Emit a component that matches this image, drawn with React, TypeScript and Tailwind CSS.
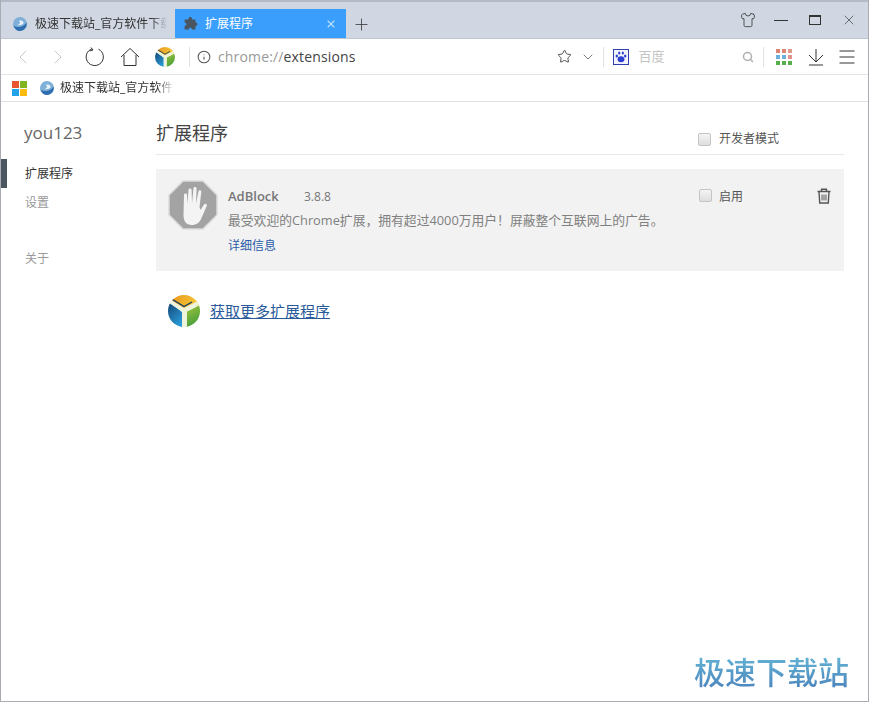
import React from 'react';
import { ChevronLeft, ChevronRight, ChevronDown, Info, Plus, Search, Shirt, Star, X } from 'lucide-react';

const font = { cjk: "font-['Open_Sans','Noto_Sans_CJK_SC',sans-serif]" };

const Logo = ({ size, id }: { size: number; id: string }) => (
  <svg width={size} height={size} viewBox="0 0 32 32">
    <defs>
      <clipPath id={`${id}-clip`}><circle cx="16" cy="16" r="16" /></clipPath>
      <linearGradient id={`${id}-top`} x1="0" y1="0" x2="1" y2="0.4">
        <stop offset="0" stopColor="#e88f1a" />
        <stop offset="1" stopColor="#f6cf3a" />
      </linearGradient>
      <linearGradient id={`${id}-left`} x1="0" y1="0" x2="0.6" y2="1">
        <stop offset="0" stopColor="#12406f" />
        <stop offset="1" stopColor="#2a9ad6" />
      </linearGradient>
      <linearGradient id={`${id}-right`} x1="0" y1="0" x2="0.4" y2="1">
        <stop offset="0" stopColor="#a6c83a" />
        <stop offset="1" stopColor="#3f9a3c" />
      </linearGradient>
    </defs>
    <g clipPath={`url(#${id}-clip)`}>
      <path d="M17 15 L3 5 L8 -2 L26 -2 L34 9 Z" fill={`url(#${id}-top)`} />
      <path d="M18 17 L34 9 L34 34 L18 34 Z" fill={`url(#${id}-right)`} />
      <path d="M14 17 L1 7 L-2 16 L2 28 L14 34 Z" fill={`url(#${id}-left)`} />
      <path d="M3 5 L16 13 L29 6.5 L31 9.5 L19 16 L19 32 L14 32 L14 16.5 L1 8 Z" fill="#eef4dc" />
      <path d="M4.5 4.5 L16 11.5 L24 7" stroke="#123c66" strokeWidth="1.4" fill="none" />
    </g>
  </svg>
);

const Globe = () => (
  <svg width="14" height="14" viewBox="0 0 14 14" className="shrink-0">
    <circle cx="7" cy="7" r="7" fill="#7fb0d8" />
    <path d="M0.5 8.5 C4 11 10 11 13.6 5.5 C14.4 10 11 14 7 14 C4 14 1.5 12 0.5 8.5 Z" fill="#2f6fb0" />
    <path d="M6 4 C8 3 11 4 10.5 6.5 C9 8 6.5 8.5 5 8 C6.5 7 8 6 6 4 Z" fill="#eaf2f9" />
  </svg>
);

const Checkbox = () => (
  <span className="block w-[13px] h-[13px] rounded-[2px] border border-[#c4c4c4] bg-gradient-to-b from-[#f4f4f4] to-[#dedede]" />
);

const Divider = () => <span className="block w-px h-[20px] bg-[#e2e2e2]" />;

export default function App() {
  return (
    <div className={`w-[869px] h-[702px] flex flex-col overflow-hidden bg-white border border-t-0 border-[#a9adb3] ${font.cjk}`}>
      {/* title bar */}
      <div className="h-[39px] shrink-0 flex items-end bg-[#d0d7e2] border-t-2 border-[#b3bac5] border-b border-b-[#bfc6d1]">
        <div className="w-[174px] h-[28px] flex items-center pl-[12px] gap-[8px] text-[12px] text-[#333]">
          <Globe />
          <span className="w-[132px] overflow-hidden whitespace-nowrap [mask-image:linear-gradient(to_right,black_88%,transparent)]">极速下载站_官方软件下载</span>
        </div>
        <div className="w-[171px] h-[29px] flex items-center pl-[8px] pr-[9px] bg-[#3a9efc] text-white text-[12px]">
          <svg width="15" height="15" viewBox="0 0 15 15" fill="#4a5560">
            <path d="M5.5 2.6 C5.5 0.4 9 0.4 9 2.6 L9 3.6 L12.5 3.6 L12.5 6.6 C14.8 6.2 15.4 10 12.5 9.8 L12.5 13.6 L8.8 13.6 C9.2 11.2 5.6 11.2 6 13.6 L1.6 13.6 L1.6 9.8 C4 10 4 6.4 1.6 6.6 L1.6 3.6 L5.5 3.6 Z" />
          </svg>
          <span className="ml-[7px] flex-1">扩展程序</span>
          <X size={12} strokeWidth={2.2} className="text-[#bfe0ff]" />
        </div>
        <Plus size={19} strokeWidth={1} className="ml-[6px] mb-[4px] text-[#333]" />
        <div className="ml-auto flex items-center pr-[11px] self-center text-[#333]">
          <Shirt size={16} strokeWidth={1.2} />
          <span className="block ml-[18px] w-[14px] h-px bg-[#333]" />
          <span className="block ml-[21px] w-[12px] h-[10px] border border-t-2 border-[#333]" />
          <X size={16} strokeWidth={1} className="ml-[20px]" />
        </div>
      </div>

      {/* toolbar */}
      <div className="h-[36px] shrink-0 flex items-center border-b border-[#e4e4e4]">
        <ChevronLeft size={24} strokeWidth={1} className="ml-[10px] text-[#c8c8c8]" />
        <ChevronRight size={24} strokeWidth={1} className="ml-[11px] text-[#c8c8c8]" />
        <svg width="20" height="20" viewBox="0 0 20 20" fill="none" stroke="#333" className="ml-[15px]">
          <path d="M7 1.8 A8.6 8.6 0 1 0 13.5 2.2" />
          <path d="M6 0.5 L8 3 L4.8 4" />
        </svg>
        <svg width="20" height="20" viewBox="0 0 20 20" fill="none" stroke="#333" className="ml-[15px]">
          <path d="M1 10 L10 1.5 L19 10" />
          <path d="M4 8 V18.5 H16 V8" />
        </svg>
        <span className="ml-[15px]"><Logo size={20} id="bar" /></span>
        <span className="ml-[14px]"><Divider /></span>
        <Info size={14} strokeWidth={1.8} className="ml-[7px] text-[#555]" />
        <span className="ml-[7px] text-[14px] tracking-[0.15px] text-[#444]"><span className="text-[#999]">chrome://</span>extensions</span>
        <Star size={15} strokeWidth={1.5} className="ml-[201px] text-[#444]" />
        <ChevronDown size={16} strokeWidth={1} className="ml-[8px] text-[#333]" />
        <span className="ml-[7px]"><Divider /></span>
        <span className="ml-[9px] w-[16px] h-[16px] flex items-center justify-center border border-[#2f3fb0] bg-[#f4f5fb]">
          <svg width="12" height="12" viewBox="0 0 12 12" fill="#2b3fd0">
            <ellipse cx="6" cy="8.3" rx="3.4" ry="3" />
            <ellipse cx="1.8" cy="5" rx="1.2" ry="1.5" />
            <ellipse cx="10.2" cy="5" rx="1.2" ry="1.5" />
            <ellipse cx="4.2" cy="2" rx="1.1" ry="1.6" />
            <ellipse cx="7.8" cy="2" rx="1.1" ry="1.6" />
          </svg>
        </span>
        <span className="ml-[10px] text-[13px] text-[#c4c4c4] w-[103px]">百度</span>
        <Search size={12} strokeWidth={3} className="text-[#b0b0b0]" />
        <span className="ml-[9px]"><Divider /></span>
        <span className="ml-[12px] grid grid-cols-3 gap-[2px]">
          {['#dc8573', '#dc8573', '#e09a8c', '#6fb1dc', '#6fb1dc', '#e0928c', '#56b04a', '#56b04a', '#56b04a'].map((c, i) => (
            <span key={i} className="block w-[4px] h-[4px]" style={{ backgroundColor: c }} />
          ))}
        </span>
        <svg width="16" height="18" viewBox="0 0 16 18" fill="none" stroke="#333" className="ml-[16px]">
          <path d="M8 1 V13 M1 7 L8 14 L15 7 M1 17 H15" />
        </svg>
        <svg width="16" height="16" viewBox="0 0 16 16" fill="none" stroke="#333" className="ml-[15px]">
          <path d="M0.5 2 H15.5 M0.5 8 H15.5 M0.5 14 H15.5" />
        </svg>
      </div>

      {/* bookmarks bar */}
      <div className="h-[27px] shrink-0 flex items-center border-b border-[#e0e0e0] text-[12px] text-[#333]">
        <span className="ml-[11px] grid grid-cols-2 gap-px">
          <span className="block w-[7px] h-[7px] bg-[#e8562f]" />
          <span className="block w-[7px] h-[7px] bg-[#80b51f]" />
          <span className="block w-[7px] h-[7px] bg-[#22a3e8]" />
          <span className="block w-[7px] h-[7px] bg-[#fbbb0f]" />
        </span>
        <span className="ml-[13px]"><Globe /></span>
        <span className="ml-[6px] w-[114px] overflow-hidden whitespace-nowrap [mask-image:linear-gradient(to_right,black_85%,transparent)]">极速下载站_官方软件下载</span>
      </div>

      {/* page */}
      <div className="flex-1 flex min-h-0">
        <aside className="w-[155px] shrink-0 flex flex-col text-[12px] text-[#999]">
          <div className="mt-[18px] pl-[23px] text-[17px] leading-[26px] text-[#666]">you123</div>
          <div className="mt-[13px] h-[29px] pl-[18px] flex items-center border-l-[6px] border-[#4c5661] text-[#333]">扩展程序</div>
          <div className="h-[29px] pl-[24px] flex items-center">设置</div>
          <div className="mt-[27px] h-[29px] pl-[24px] flex items-center">关于</div>
        </aside>
        <main className="w-[688px] shrink-0 flex flex-col relative">
          <div className="h-[53px] shrink-0 flex items-end justify-between border-b border-[#e8e8e8] pb-[8px]">
            <h1 className="text-[18px] leading-[26px] text-[#444]">扩展程序</h1>
            <label className="flex items-center gap-[8px] mr-[65px] mb-[-2px] text-[12px] text-[#555]"><Checkbox />开发者模式</label>
          </div>
          <div className="mt-[14px] h-[102px] shrink-0 flex bg-[#f2f2f2] pl-[12px] pr-[12px] pt-[11px]">
            <svg width="50" height="50" viewBox="0 0 50 50" className="shrink-0">
              <path d="M15 1 H35 L49 15 V35 L35 49 H15 L1 35 V15 Z" fill="#a3a3a3" stroke="#dcdcdc" strokeWidth="1.5" />
              <path d="M16 15 C16 13 19 13 19 15 L19.5 24 L20.5 10 C20.6 8 23.6 8 23.6 10 L24 23 L25.5 8.5 C25.6 6.5 28.6 6.5 28.6 8.8 L28 23.5 L30.5 11.5 C31 9.5 33.6 10 33.3 12 L31.5 27 L32.5 30 L36 24.5 C37.2 22.8 39.6 24 38.7 26 L33.5 38 C31.5 43 28 45 24 45 C18 45 15.5 41 15.5 35 Z" fill="#f4f4f4" />
            </svg>
            <div className="ml-[10px] flex-1 flex flex-col">
              <div className="flex items-center h-[30px] mt-[2px]">
                <span className="w-[76px] text-[13px] font-semibold text-[#777]">AdBlock</span>
                <span className="text-[12px] text-[#777]">3.8.8</span>
              </div>
              <div className="h-[20px] -mt-[2px] text-[12.8px] leading-[20px] text-[#808080] whitespace-nowrap">最受欢迎的Chrome扩展，拥有超过4000万用户！屏蔽整个互联网上的广告。</div>
              <a className="mt-[7px] text-[12px] leading-[18px] text-[#2a5ca8]">详细信息</a>
            </div>
            <label className="flex items-start gap-[7px] mt-[9px] -ml-[2px] w-[55px] text-[12px] leading-[15px] text-[#555]"><Checkbox />启用</label>
            <svg width="14" height="16" viewBox="0 0 14 16" fill="none" stroke="#555" strokeWidth="1.4" className="ml-[64px] mr-[0px] mt-[8px] shrink-0 -translate-x-[1px]">
              <path d="M0.5 3.5 H13.5 M4.5 3 V1.2 H9.5 V3 M2 3.5 L2.7 15 H11.3 L12 3.5" />
              <path d="M5 6.5 V12.5 M7 6.5 V12.5 M9 6.5 V12.5" strokeWidth="1" />
            </svg>
          </div>
          <div className="mt-[24px] ml-[12px] flex items-center gap-[10px]">
            <Logo size={32} id="more" />
            <a className="text-[15px] text-[#2a5a9a] underline">获取更多扩展程序</a>
          </div>
          <div className="absolute right-[-5px] bottom-[10px] text-[31px] leading-[38px] font-medium bg-clip-text text-transparent bg-gradient-to-b from-[#66b8d6] to-[#4a82bc]">极速下载站</div>
        </main>
      </div>
    </div>
  );
}
